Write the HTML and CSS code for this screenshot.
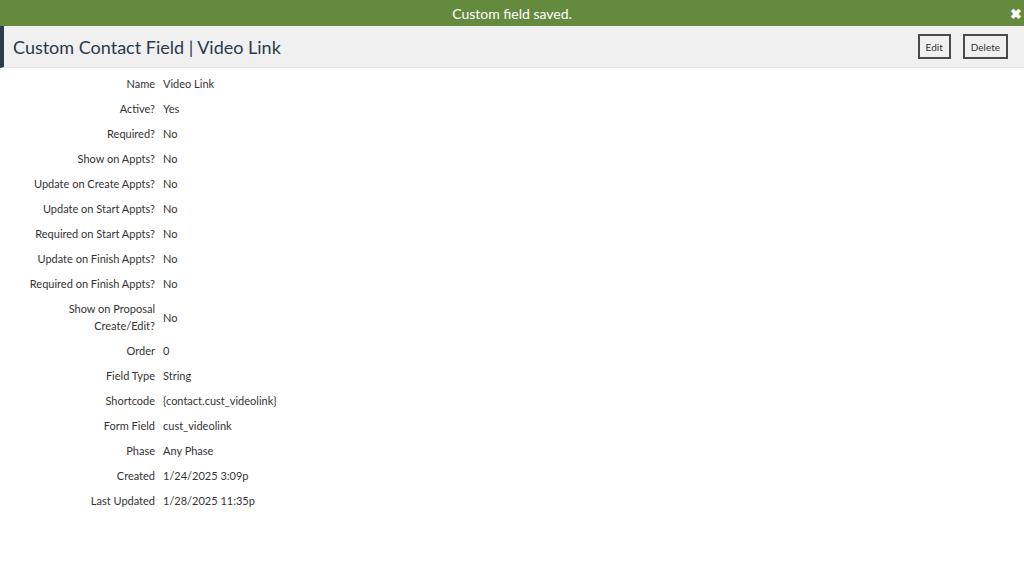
FILE: index.html
```html
<!DOCTYPE html>
<html>
<head>
<meta charset="utf-8">
<link rel="stylesheet" href="styles.css">
</head>
<body>
<div class="flash">
  <span class="flash-text">Custom field saved.</span>
  <span class="flash-close">&#10006;</span>
</div>
<div class="header">
  <h1 class="title">Custom Contact Field | Video Link</h1>
  <div class="actions">
    <button class="btn">Edit</button>
    <button class="btn">Delete</button>
  </div>
</div>
<div class="details">
  <div class="label">Name</div><div class="value">Video Link</div>
  <div class="label">Active?</div><div class="value">Yes</div>
  <div class="label">Required?</div><div class="value">No</div>
  <div class="label">Show on Appts?</div><div class="value">No</div>
  <div class="label">Update on Create Appts?</div><div class="value">No</div>
  <div class="label">Update on Start Appts?</div><div class="value">No</div>
  <div class="label">Required on Start Appts?</div><div class="value">No</div>
  <div class="label">Update on Finish Appts?</div><div class="value">No</div>
  <div class="label">Required on Finish Appts?</div><div class="value">No</div>
  <div class="label">Show on Proposal Create/Edit?</div><div class="value">No</div>
  <div class="label">Order</div><div class="value">0</div>
  <div class="label">Field Type</div><div class="value">String</div>
  <div class="label">Shortcode</div><div class="value">{contact.cust_videolink}</div>
  <div class="label">Form Field</div><div class="value">cust_videolink</div>
  <div class="label">Phase</div><div class="value">Any Phase</div>
  <div class="label">Created</div><div class="value">1/24/2025 3:09p</div>
  <div class="label">Last Updated</div><div class="value">1/28/2025 11:35p</div>
</div>
</body>
</html>
```
FILE: styles.css
```css
* { box-sizing: border-box; }
body {
  margin: 0;
  font-family: Lato, "Noto Sans", sans-serif;
  color: #333;
  background: #fff;
}
.flash {
  height: 26px;
  background: #648a3d;
  color: #fff;
  display: flex;
  align-items: center;
  justify-content: center;
  position: relative;
}
.flash-text {
  font-size: 14px;
}
.flash-close {
  position: absolute;
  right: 2px;
  top: 7px;
  font-size: 14px;
  font-weight: bold;
  line-height: 1;
}
.header {
  height: 42px;
  background: #f0f0f0;
  border-left: 4px solid #2d3a4b;
  border-bottom: 1px solid #e2e2e2;
  display: flex;
  align-items: center;
  justify-content: space-between;
  padding: 0 16px 0 9px;
}
.title {
  margin: 0;
  font-size: 18px;
  font-weight: normal;
  color: #2b3a4d;
}
.actions {
  display: flex;
  gap: 12px;
}
.btn {
  height: 25px;
  padding: 0 6px;
  background: #f0f0f0;
  border: 2px solid #4a4a4a;
  font-family: Lato, "Noto Sans", sans-serif;
  font-size: 10px;
  color: #333;
}
.details {
  display: grid;
  grid-template-columns: 155px 1fr;
  column-gap: 8px;
  padding-top: 3px;
  font-size: 11px;
  line-height: 17px;
}
.label, .value {
  padding: 4px 0;
  display: flex;
  align-items: center;
}
.label {
  justify-content: flex-end;
  text-align: right;
  padding-left: 8px;
}
```
